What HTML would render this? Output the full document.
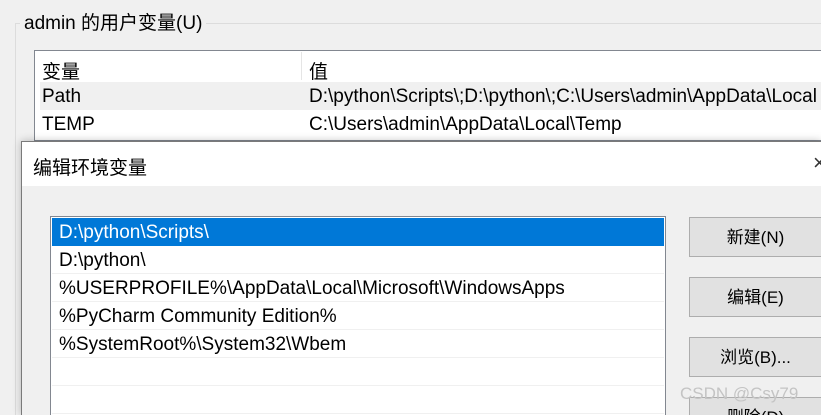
<!DOCTYPE html><html><head><style>
html,body{margin:0;width:821px;height:415px;overflow:hidden}
body{background:#f0f0f0;font-family:"Liberation Sans","Noto Sans CJK SC",sans-serif;font-size:19px;color:#000;position:relative}
.a{position:absolute;white-space:nowrap}
.btn{position:absolute;left:689px;width:132px;height:40px;background:#e1e1e1;border:1px solid #adadad;border-right:none;box-sizing:border-box;text-align:center;line-height:40px;font-size:17px;overflow:hidden}
.row{position:absolute;left:52px;width:612px;height:28px;border-bottom:1px solid #f0f0f0;box-sizing:border-box;line-height:30px;padding-left:7px}
</style></head><body>
<div class="a" style="left:15px;top:23px;width:806px;height:392px;border:1px solid #dcdcdc;border-right:none;border-bottom:none;box-sizing:border-box"></div>
<div class="a" style="left:20px;top:11px;background:#f0f0f0;padding:0 4px;line-height:26px">admin 的用户变量(U)</div>
<div class="a" style="left:34px;top:50px;width:787px;height:91px;background:#fff;border:1px solid #828790;border-right:none;box-sizing:border-box"></div>
<div class="a" style="left:301px;top:52px;width:1px;height:28px;background:#e5e5e5"></div>
<div class="a" style="left:40px;top:82px;width:781px;height:28px;background:#f0f0f0"></div>
<div class="a" style="left:42px;top:57px">变量</div>
<div class="a" style="left:309px;top:57px">值</div>
<div class="a" style="left:42px;top:86px">Path</div>
<div class="a" style="left:309px;top:86px">D:\python\Scripts\;D:\python\;C:\Users\admin\AppData\Local</div>
<div class="a" style="left:42px;top:114px">TEMP</div>
<div class="a" style="left:309px;top:114px">C:\Users\admin\AppData\Local\Temp</div>
<div class="a" style="left:21px;top:141px;width:800px;height:274px;background:#f0f0f0;border:1px solid #7a7a7a;border-right:none;border-bottom:none;box-sizing:border-box;box-shadow:0 0 8px rgba(0,0,0,.25)"></div>
<div class="a" style="left:22px;top:142px;width:799px;height:44px;background:#fff"></div>
<div class="a" style="left:33px;top:153px">编辑环境变量</div>
<div class="a" style="left:813px;top:150px;font-size:22px;color:#333;font-weight:100">×</div>
<div class="a" style="left:50px;top:216px;width:616px;height:199px;background:#fff;border:1px solid #828790;border-bottom:none;box-sizing:border-box"></div>
<div class="row" style="top:218px;background:#0078d7;color:#fff;border:none">D:\python\Scripts\</div>
<div class="row" style="top:246px">D:\python\</div>
<div class="row" style="top:274px">%USERPROFILE%\AppData\Local\Microsoft\WindowsApps</div>
<div class="row" style="top:302px">%PyCharm Community Edition%</div>
<div class="row" style="top:330px">%SystemRoot%\System32\Wbem</div>
<div class="row" style="top:358px"></div>
<div class="row" style="top:386px"></div>
<div class="btn" style="top:217px">新建(N)</div>
<div class="btn" style="top:277px">编辑(E)</div>
<div class="btn" style="top:337px">浏览(B)...</div>
<div class="btn" style="top:397px;height:18px;border-bottom:none">删除(D)</div>
<div class="a" style="left:680px;top:384px;color:#c4c4c4;font-size:17px">CSDN @Csy79</div>
</body></html>
